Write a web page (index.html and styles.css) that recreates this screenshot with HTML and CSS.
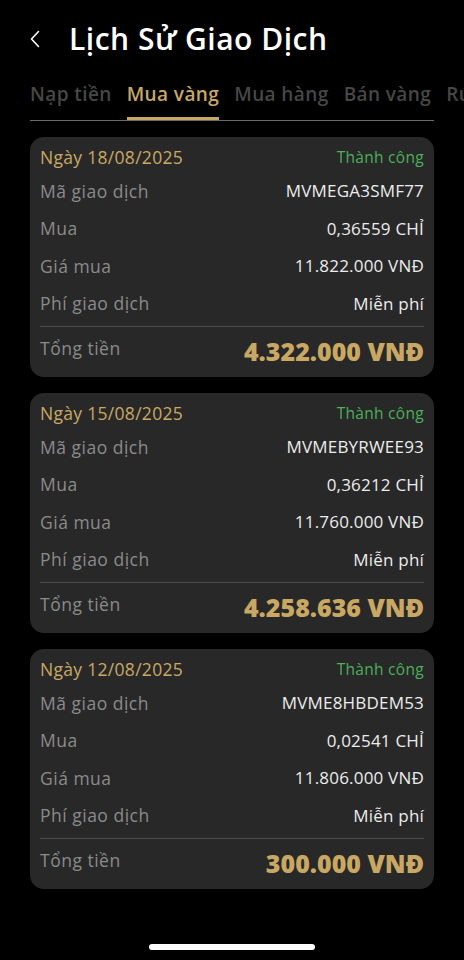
FILE: index.html
```html
<!DOCTYPE html>
<html lang="vi">
<head>
<meta charset="utf-8">
<link rel="stylesheet" href="styles.css">
</head>
<body>
<div class="screen">
  <header class="header">
    <svg class="back" width="12" height="18" viewBox="0 0 12 18"><path d="M9.5 1.5 L2.5 9 L9.5 16.5" fill="none" stroke="#fff" stroke-width="1.6" stroke-linecap="round" stroke-linejoin="round"/></svg>
    <h1 class="title">Lịch Sử Giao Dịch</h1>
  </header>
  <nav class="tabs">
    <div class="tab">Nạp tiền</div>
    <div class="tab active">Mua vàng</div>
    <div class="tab">Mua hàng</div>
    <div class="tab">Bán vàng</div>
    <div class="tab">Rút vàng</div>
  </nav>
  <main class="list">
    <section class="card">
      <div class="row head"><span class="date">Ngày 18/08/2025</span><span class="status">Thành công</span></div>
      <div class="row"><span class="label">Mã giao dịch</span><span class="value">MVMEGA3SMF77</span></div>
      <div class="row"><span class="label">Mua</span><span class="value">0,36559 CHỈ</span></div>
      <div class="row"><span class="label">Giá mua</span><span class="value">11.822.000 VNĐ</span></div>
      <div class="row"><span class="label">Phí giao dịch</span><span class="value">Miễn phí</span></div>
      <div class="row total"><span class="label">Tổng tiền</span><span class="amount">4.322.000 VNĐ</span></div>
    </section>
    <section class="card">
      <div class="row head"><span class="date">Ngày 15/08/2025</span><span class="status">Thành công</span></div>
      <div class="row"><span class="label">Mã giao dịch</span><span class="value">MVMEBYRWEE93</span></div>
      <div class="row"><span class="label">Mua</span><span class="value">0,36212 CHỈ</span></div>
      <div class="row"><span class="label">Giá mua</span><span class="value">11.760.000 VNĐ</span></div>
      <div class="row"><span class="label">Phí giao dịch</span><span class="value">Miễn phí</span></div>
      <div class="row total"><span class="label">Tổng tiền</span><span class="amount">4.258.636 VNĐ</span></div>
    </section>
    <section class="card">
      <div class="row head"><span class="date">Ngày 12/08/2025</span><span class="status">Thành công</span></div>
      <div class="row"><span class="label">Mã giao dịch</span><span class="value">MVME8HBDEM53</span></div>
      <div class="row"><span class="label">Mua</span><span class="value">0,02541 CHỈ</span></div>
      <div class="row"><span class="label">Giá mua</span><span class="value">11.806.000 VNĐ</span></div>
      <div class="row"><span class="label">Phí giao dịch</span><span class="value">Miễn phí</span></div>
      <div class="row total"><span class="label">Tổng tiền</span><span class="amount">300.000 VNĐ</span></div>
    </section>
  </main>
  <div class="home-bar"></div>
</div>
</body>
</html>
```
FILE: styles.css
```css
* { box-sizing: border-box; margin: 0; padding: 0; }
html, body { background: #000; }
body { width: 464px; height: 960px; overflow: hidden; font-family: "Open Sans", "Noto Sans", sans-serif; color: #fff; }
.screen { position: relative; height: 960px; display: flex; flex-direction: column; overflow: hidden; }
.header { display: flex; align-items: center; height: 38px; margin-top: 20px; padding-left: 29px; gap: 28px; }
.back { flex: none; }
.title { font-size: 30px; font-weight: 600; letter-spacing: 0.5px; color: #fff; line-height: 38px; }
.tabs { position: relative; display: flex; gap: 15px; margin: 18px 0 0 30px; white-space: nowrap; overflow: hidden; height: 45px; }
.tabs::after { content: ""; position: absolute; left: 0; bottom: 0; width: 404px; height: 1px; background: #6b6b6b; }
.tab { font-size: 19px; font-weight: 600; letter-spacing: 0.4px; color: #474747; line-height: 36px; height: 44px; flex: none; }
.tab.active { position: relative; z-index: 1; color: #c9a864; border-bottom: 3px solid #c9a864; }
.list { display: flex; flex-direction: column; gap: 16px; padding: 16px 30px 0 30px; }
.card { background: #282828; border-radius: 14px; height: 240px; padding: 8px 10px 0 10px; display: flex; flex-direction: column; }
.row { display: flex; justify-content: space-between; align-items: center; height: 37.5px; }
.row.head { height: 24px; margin-bottom: 3px; }
.date { color: #c9a864; font-size: 17.5px; letter-spacing: 0.3px; }
.status { color: #4caf5a; font-size: 15.5px; letter-spacing: 0.3px; }
.label { color: #8b8b8b; font-size: 17.5px; letter-spacing: 0.5px; }
.value { color: #ececec; font-size: 17px; letter-spacing: 0.2px; }
.row.total { border-top: 1px solid #4e4e4e; margin-top: 4px; height: 50px; align-items: flex-start; padding-top: 6px; }
.amount { color: #c9a864; font-size: 25px; font-weight: 800; line-height: 36px; }
.total .label { line-height: 30px; }
.home-bar { position: absolute; left: 149px; bottom: 10px; width: 166px; height: 6px; border-radius: 3px; background: #fff; }
```
